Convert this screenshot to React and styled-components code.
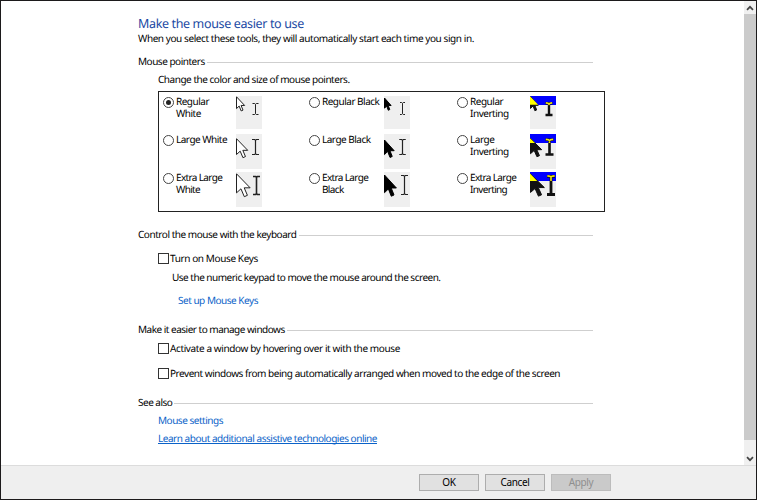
import React from "react";
import styled, { createGlobalStyle } from "styled-components";

const Global = createGlobalStyle`
  html, body { margin: 0; padding: 0; }
  * { box-sizing: border-box; }
`;

const Window = styled.div`
  width: 757px;
  height: 500px;
  border: 1px solid #1c1a1b;
  display: flex;
  flex-direction: column;
  background: #fff;
  color: #000;
  font: 10px/12px "Noto Sans", "Open Sans", sans-serif;
  text-rendering: geometricPrecision;
  overflow: hidden;
`;
const Main = styled.div`
  height: 464px;
  display: flex;
  justify-content: space-between;
`;
const Page = styled.main`
  width: 592px;
  padding: 15px 0 0 137px;
  display: flex;
  flex-direction: column;
  align-items: flex-start;
`;
const Title = styled.h1`
  margin: 0;
  font-size: 12.5px;
  font-weight: 400;
  line-height: 16px;
  letter-spacing: ${(p) => p.$ls}px;
  color: #1c4aa4;
  white-space: nowrap;
`;
const Line = styled.div`
  height: 12px;
  margin: ${(p) => p.$top}px 0 0 ${(p) => p.$indent || 0}px;
  letter-spacing: ${(p) => p.$ls || 0}px;
  white-space: nowrap;
`;
const Link = styled.a`
  height: 12px;
  margin: ${(p) => p.$top}px 0 0 ${(p) => p.$indent}px;
  letter-spacing: ${(p) => p.$ls || 0}px;
  color: #0a62c8;
  white-space: nowrap;
  text-decoration: ${(p) => (p.$underlined ? "underline" : "none")};
  text-decoration-skip-ink: none;
  text-underline-offset: 1px;
`;
const SectionRow = styled.h2`
  width: 455px;
  height: 12px;
  margin: ${(p) => p.$top}px 0 0;
  display: flex;
  align-items: flex-start;
  gap: 2px;
  font-size: inherit;
  font-weight: 400;
  line-height: 11px;
  letter-spacing: ${(p) => p.$ls || 0}px;
  white-space: nowrap;
  &::after {
    content: "";
    flex: 1;
    height: 1px;
    margin-top: 6px;
    background: #cfcfcf;
  }
`;
const CheckRow = styled.label`
  height: 12px;
  margin: ${(p) => p.$top}px 0 0 20px;
  display: flex;
  align-items: flex-start;
  gap: 1px;
  line-height: 11px;
  letter-spacing: ${(p) => p.$ls || 0}px;
  white-space: nowrap;
`;
const Box = styled.span`
  width: 11px;
  height: 11px;
  border: 1px solid #333;
  background: #fff;
`;
const Choices = styled.div`
  width: 447px;
  height: 121px;
  margin: 6px 0 0 20px;
  padding: 4px 0 0 4px;
  border: 1px solid #222;
  display: grid;
  grid-template-columns: 146px 148px 147px;
  grid-template-rows: 38px 38px 36px;
`;
const Choice = styled.label`
  display: flex;
  align-items: flex-start;
`;
const Radio = styled.span`
  width: 11px;
  height: 11px;
  margin: 1px 2px 0 0;
  flex: none;
  border: 1px solid #444;
  border-radius: 50%;
  display: grid;
  place-items: center;
  &::after {
    content: "";
    width: 5px;
    height: 5px;
    border-radius: 50%;
    background: ${(p) => (p.$on ? "#222" : "transparent")};
  }
`;
const ChoiceText = styled.span`
  width: ${(p) => p.$w}px;
  margin-top: -1px;
  flex: none;
  letter-spacing: ${(p) => p.$ls}px;
  white-space: pre;
`;
const Tile = styled.svg`
  width: 26px;
  height: ${(p) => p.$h}px;
  flex: none;
  background: #efefef;
`;
const ScrollBar = styled.div`
  width: 12px;
  display: flex;
  flex-direction: column;
  background: #f0f0f0;
`;
const ScrollButton = styled.div`
  height: 13px;
  display: grid;
  place-items: center;
`;
const Thumb = styled.div`
  height: 426px;
  margin-bottom: 12px;
  background: #cbcbcb;
`;
const Footer = styled.footer`
  flex: 1;
  border-top: 1px solid #dcdcdc;
  background: #efefef;
  padding: 8px 0 0 418px;
  display: flex;
  align-items: flex-start;
  gap: 6px;
`;
const Button = styled.button`
  width: 60px;
  height: 17px;
  padding: 0 0 1px;
  border: 1px solid ${(p) => (p.disabled ? "#bcbcbc" : "#adadad")};
  background: ${(p) => (p.disabled ? "#cacaca" : "#e1e1e1")};
  color: ${(p) => (p.disabled ? "#8f8f8f" : "#000")};
  font: inherit;
  letter-spacing: -0.35px;
`;

const ARROW = "M0 0V15.5L3.6 12.2L6.3 18.6L8.8 17.5L6.2 11.4H11Z";

function Arrow({ y, sx, sy, fill, stroke }) {
  return (
    <path
      d={ARROW}
      transform={`translate(0.5 ${y}) scale(${sx} ${sy})`}
      fill={fill}
      stroke={stroke}
      strokeWidth="1"
      vectorEffect="non-scaling-stroke"
    />
  );
}

function IBeam({ x, top, bottom, w, color, thick }) {
  const h = w / 2;
  return (
    <path
      d={`M${x - h} ${top}H${x - 0.8}L${x} ${top + 1}L${x + 0.8} ${top}H${x + h}M${x} ${top + 1}V${bottom - 1}M${x - h} ${bottom}H${x - 0.8}L${x} ${bottom - 1}L${x + 0.8} ${bottom}H${x + h}`}
      fill="none"
      stroke={color}
      strokeWidth={thick}
    />
  );
}

const SIZES = {
  white: [
    { h: 33, y: 0.8, sx: 0.74, sy: 0.76, x: 19.5, top: 7.5, bottom: 18.5, w: 6, t: 1 },
    { h: 35, y: 4.7, sx: 1.02, sy: 1.02, x: 19.5, top: 5.5, bottom: 20.5, w: 7, t: 1.2 },
    { h: 35, y: 1.8, sx: 1.24, sy: 1.23, x: 20.5, top: 4.5, bottom: 22.5, w: 7, t: 1.6 },
  ],
  black: [
    { h: 33, y: 2, sx: 0.6, sy: 0.66, x: 18.5, top: 6.5, bottom: 18.5, w: 5, t: 1 },
    { h: 35, y: 6, sx: 0.88, sy: 0.94, x: 18.5, top: 5.5, bottom: 20.5, w: 6.5, t: 1.2 },
    { h: 35, y: 3, sx: 1.08, sy: 1.14, x: 20.5, top: 3.5, bottom: 22.5, w: 7, t: 1.2 },
  ],
  invert: [
    { h: 33, y: 0.8, sx: 0.7, sy: 0.75, x: 19, top: 7.3, bottom: 19, w: 7, t: 2.4 },
    { h: 35, y: 4.5, sx: 1.02, sy: 0.98, x: 19.5, top: 5.8, bottom: 20.5, w: 8, t: 2.6 },
    { h: 35, y: 2, sx: 1.26, sy: 1.19, x: 21, top: 4.3, bottom: 22.5, w: 8, t: 2.8 },
  ],
};

function PointerTile({ kind, size }) {
  const s = SIZES[kind][size];
  const beam = { x: s.x, top: s.top, bottom: s.bottom, w: s.w, thick: s.t };
  if (kind !== "invert") {
    return (
      <Tile $h={s.h} viewBox={`0 0 26 ${s.h}`}>
        <Arrow y={s.y} sx={s.sx} sy={s.sy} fill={kind === "white" ? "#fff" : "#000"} stroke={kind === "white" ? "#222" : "#000"} />
        <IBeam {...beam} color="#222" />
      </Tile>
    );
  }
  const x = s.x;
  const wedge = ["M0 .3L8.2 8.7H0Z", "M0 4.2L5 9H0Z", "M0 1.5L7.2 9H0Z"][size];
  return (
    <Tile $h={s.h} viewBox={`0 0 26 ${s.h}`}>
      <rect width="26" height="9" fill="#0000fe" />
      <Arrow y={s.y} sx={s.sx} sy={s.sy} fill="#111" stroke="#111" />
      <IBeam {...beam} color="#111" />
      <path d={wedge} fill="#ffff00" />
      <path
        d={`M${x - s.w / 2 + 0.3} ${s.top - 0.4}L${x - 1} ${s.top}L${x} ${s.top + 1}L${x + 1} ${s.top}L${x + s.w / 2 - 0.3} ${s.top - 0.4}M${x} ${s.top + 1}V9`}
        fill="none"
        stroke="#f0e810"
        strokeWidth="1.6"
      />
    </Tile>
  );
}

const CHOICES = [
  ["Regular\nWhite", "white", 0, -0.5],
  ["Regular Black", "black", 0, -0.5],
  ["Regular\nInverting", "invert", 0, -0.47],
  ["Large White", "white", 1, -0.5],
  ["Large Black", "black", 1, -0.5],
  ["Large\nInverting", "invert", 1, -0.47],
  ["Extra Large\nWhite", "white", 2, -0.65],
  ["Extra Large\nBlack", "black", 2, -0.65],
  ["Extra Large\nInverting", "invert", 2, -0.65],
];
const LABEL_WIDTH = { white: 60, black: 62, invert: 60 };

function Chevron({ down }) {
  return (
    <svg width="8" height="6" viewBox="0 0 8 6">
      <path d={down ? "M1 1.2L4 4.2L7 1.2" : "M1 4.8L4 1.8L7 4.8"} fill="none" stroke="#444" strokeWidth="1.7" />
    </svg>
  );
}

export default function App() {
  return (
    <>
      <Global />
      <Window>
        <Main>
          <Page>
            <Title $ls={-0.36}>Make the mouse easier to use</Title>
            <Line $top={0} $ls={-0.42}>When you select these tools, they will automatically start each time you sign in.</Line>
            <SectionRow $top={12} $ls={-0.48}>Mouse pointers</SectionRow>
            <Line $top={5} $indent={20} $ls={-0.47}>Change the color and size of mouse pointers.</Line>
            <Choices>
              {CHOICES.map(([label, kind, size, ls], i) => (
                <Choice key={label}>
                  <Radio $on={i === 0} />
                  <ChoiceText $w={LABEL_WIDTH[kind]} $ls={ls}>{label}</ChoiceText>
                  <PointerTile kind={kind} size={size} />
                </Choice>
              ))}
            </Choices>
            <SectionRow $top={17} $ls={-0.46}>Control the mouse with the keyboard</SectionRow>
            <CheckRow $top={12} $ls={-0.39}><Box />Turn on Mouse Keys</CheckRow>
            <Line $top={6} $indent={34} $ls={-0.5}>Use the numeric keypad to move the mouse around the screen.</Line>
            <Link $top={11} $indent={40} $ls={-0.48}>Set up Mouse Keys</Link>
            <SectionRow $top={18} $ls={-0.5}>Make it easier to manage windows</SectionRow>
            <CheckRow $top={7} $ls={-0.39}><Box />Activate a window by hovering over it with the mouse</CheckRow>
            <CheckRow $top={13} $ls={-0.46}><Box />Prevent windows from being automatically arranged when moved to the edge of the screen</CheckRow>
            <SectionRow $top={17} $ls={-0.5}>See also</SectionRow>
            <Link $top={5} $indent={20} $ls={-0.48}>Mouse settings</Link>
            <Link $top={6} $indent={20} $ls={-0.47} $underlined>Learn about additional assistive technologies online</Link>
          </Page>
          <ScrollBar>
            <ScrollButton><Chevron /></ScrollButton>
            <Thumb />
            <ScrollButton><Chevron down /></ScrollButton>
          </ScrollBar>
        </Main>
        <Footer>
          <Button>OK</Button>
          <Button>Cancel</Button>
          <Button disabled>Apply</Button>
        </Footer>
      </Window>
    </>
  );
}
